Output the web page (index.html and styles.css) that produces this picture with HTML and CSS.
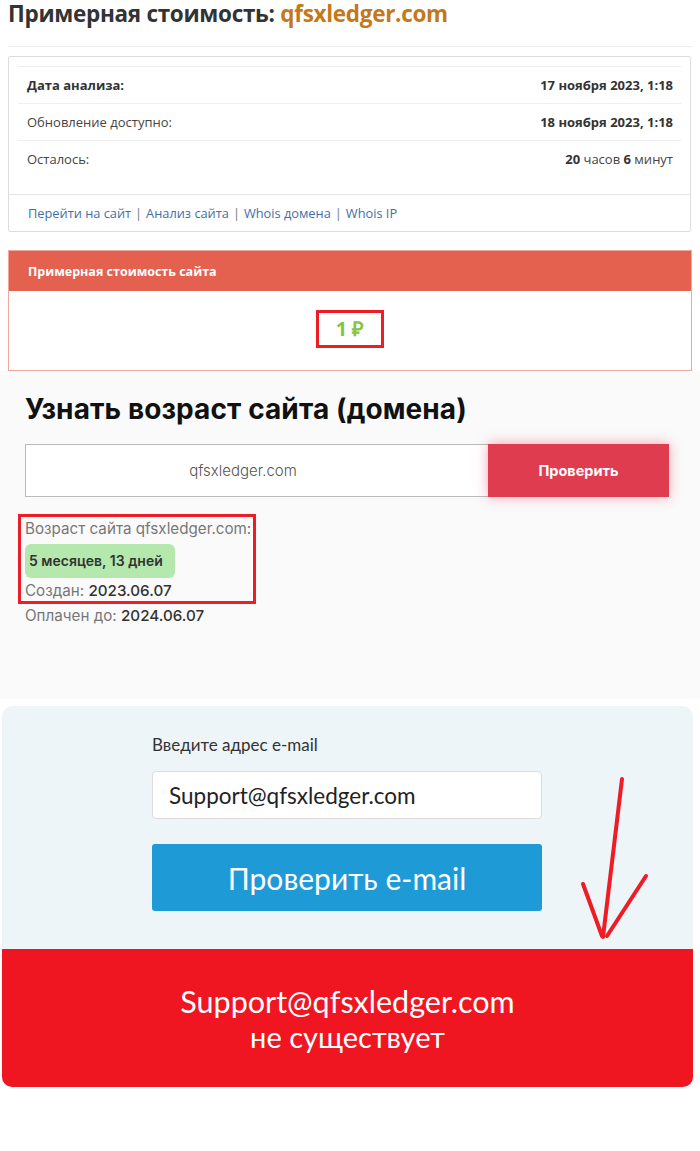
FILE: index.html
```html
<!DOCTYPE html>
<html lang="ru">
<head>
<meta charset="utf-8">
<title>Примерная стоимость: qfsxledger.com</title>
<link rel="stylesheet" href="styles.css">
</head>
<body>
<section class="cost">
  <h1 class="cost-title">Примерная стоимость: <span class="domain">qfsxledger.com</span></h1>
  <hr class="divider">
  <div class="info-box">
    <div class="info-table">
      <div class="info-row head"><span>Дата анализа:</span><b>17 ноября 2023, 1:18</b></div>
      <div class="info-row"><span>Обновление доступно:</span><b>18 ноября 2023, 1:18</b></div>
      <div class="info-row"><span>Осталось:</span><span><b>20</b> часов <b>6</b> минут</span></div>
    </div>
    <div class="info-links">
      <a href="#">Перейти на сайт</a> <span class="sep">|</span> <a href="#">Анализ сайта</a> <span class="sep">|</span> <a href="#">Whois домена</a> <span class="sep">|</span> <a href="#">Whois IP</a>
    </div>
  </div>
  <div class="price-panel">
    <div class="price-head">Примерная стоимость сайта</div>
    <div class="price-body"><span class="price-value">1 ₽</span></div>
  </div>
</section>

<section class="age">
  <h2 class="age-title">Узнать возраст сайта (домена)</h2>
  <div class="age-form">
    <div class="age-input">qfsxledger.com</div>
    <div class="age-btn">Проверить</div>
  </div>
  <div class="age-mark">
    <div class="age-line">Возраст сайта qfsxledger.com:</div>
    <div class="age-pill">5 месяцев, 13 дней</div>
    <div class="age-line">Создан: <span class="val">2023.06.07</span></div>
  </div>
  <div class="age-line">Оплачен до: <span class="val">2024.06.07</span></div>
</section>

<section class="email-card">
  <div class="email-top">
    <div class="email-form">
      <div class="email-label">Введите адрес e-mail</div>
      <div class="email-input">Support@qfsxledger.com</div>
      <div class="email-btn">Проверить e-mail</div>
    </div>
  </div>
  <div class="email-result">
    <div class="res-mail">Support@qfsxledger.com</div>
    <div class="res-text">не существует</div>
  </div>
  <svg class="arrow" width="90" height="180" viewBox="0 0 90 180" fill="none" stroke="#ee1c25" stroke-width="4" stroke-linecap="round" stroke-linejoin="round">
    <path d="M52 10 C47 55 40 110 33 168"/>
    <path d="M13 115 L32 167"/>
    <path d="M76 107 L37 167"/>
  </svg>
</section>
</body>
</html>
```
FILE: styles.css
```css
* { box-sizing: border-box; }
html, body { margin: 0; padding: 0; background: #fff; }
body { width: 700px; }

.cost {
  padding: 0 8px 0 8px;
  font-family: "Open Sans", "Liberation Sans", sans-serif;
  color: #333;
}
.cost-title {
  margin: 0;
  font-size: 22.5px;
  line-height: 28px;
  font-weight: 700;
  color: #333;
  letter-spacing: -0.3px;
}
.cost-title .domain { color: #c4781a; }
.divider {
  border: 0;
  border-top: 1px solid #eee;
  margin: 18px 0 9px 0;
  height: 0;
}
.info-box {
  border: 1px solid #ddd;
  border-radius: 2px;
  padding: 9px 9px 0 9px;
  width: 683px;
}
.info-table { margin-bottom: 17px; }
.info-row {
  display: flex;
  justify-content: space-between;
  align-items: center;
  height: 37px;
  padding: 0 8px 0 9px;
  border-top: 1px solid #eee;
  font-size: 13px;
  color: #444;
}
.info-row.head span { font-weight: 700; color: #333; }
.info-row b { font-weight: 700; color: #333; }
.info-links {
  margin: 0 -9px;
  border-top: 1px solid #e5e5e5;
  height: 37px;
  padding: 0 19px;
  display: flex;
  align-items: center;
  gap: 4px;
  font-size: 12.8px;
}
.info-links a { color: #3f6fa6; text-decoration: none; }
.info-links .sep { color: #777; }

.price-panel {
  margin-top: 18px;
  border: 1px solid #f0a89e;
  width: 684px;
}
.price-head {
  background: #e5614f;
  height: 40px;
  display: flex;
  align-items: center;
  padding-left: 19px;
  color: #fff;
  font-weight: 700;
  font-size: 12.5px;
}
.price-body {
  height: 79px;
  display: flex;
  justify-content: center;
  align-items: center;
  background: #fff;
}
.price-value {
  display: inline-block;
  border: 3px solid #ee1c25;
  width: 68px;
  height: 38px;
  line-height: 32px;
  text-align: center;
  color: #86c443;
  font-weight: 700;
  font-size: 20px;
  margin-top: -4px;
}

.age {
  background: #fafafa;
  padding: 21px 25px 0 25px;
  height: 328px;
  font-family: "Inter", "Noto Sans", sans-serif;
}
.age-title {
  margin: 0;
  font-size: 28px;
  line-height: 34px;
  font-weight: 700;
  color: #111;
  letter-spacing: 0.1px;
}
.age-form {
  display: flex;
  margin-top: 18px;
  height: 53px;
}
.age-input {
  width: 463px;
  background: #fff;
  border: 1px solid #bbb;
  border-right: 0;
  display: flex;
  align-items: center;
  justify-content: center;
  padding-right: 28px;
  color: #555;
  font-size: 15px;
  font-weight: 300;
}
.age-btn {
  width: 181px;
  background: #e03c4f;
  color: #fff;
  font-weight: 700;
  font-size: 14.5px;
  display: flex;
  align-items: center;
  justify-content: center;
  box-shadow: 0 0 12px rgba(224, 60, 79, 0.45);
}
.age-mark {
  display: inline-block;
  border: 3px solid #ee1c25;
  margin: 17px 0 0 -7px;
  padding: 2px 4px 0 4px;
  width: 238px;
}
.age-line {
  font-size: 15.2px;
  line-height: 20px;
  color: #777;
  font-weight: 400;
  white-space: nowrap;
}
.age-line .val { color: #333; font-weight: 500; }
.age-pill {
  display: inline-block;
  margin: 5px 0 3px 0;
  background: #b4e8ad;
  border-radius: 6px;
  height: 34px;
  line-height: 34px;
  padding: 0 4px;
  width: 150px;
  color: #333;
  font-weight: 600;
  font-size: 14px;
}
.age > .age-line { margin-top: 2px; }

.email-card {
  position: relative;
  margin: 7px 7px 0 2px;
  border-radius: 10px;
  overflow: hidden;
  background: #edf5f9;
  font-family: "Lato", "Open Sans", sans-serif;
  width: 691px;
}
.email-top {
  padding: 29px 0 38px 150px;
}
.email-form { width: 390px; }
.email-label {
  font-size: 17px;
  line-height: 20px;
  color: #333;
  margin-bottom: 16px;
}
.email-input {
  height: 48px;
  background: #fff;
  border: 1px solid #dcdcdc;
  border-radius: 4px;
  padding-left: 16px;
  display: flex;
  align-items: center;
  font-size: 22.5px;
  color: #222;
}
.email-btn {
  margin-top: 25px;
  height: 67px;
  background: #1e9ad6;
  border-radius: 3px;
  color: #fff;
  display: flex;
  align-items: center;
  justify-content: center;
  font-size: 30px;
}
.email-result {
  background: #ef1622;
  color: #fff;
  text-align: center;
  padding: 34px 0 32px 0;
}
.res-mail { font-size: 30.5px; line-height: 36px; }
.res-text { font-size: 29px; line-height: 36px; }
.arrow {
  position: absolute;
  left: 568px;
  top: 63px;
}
```
